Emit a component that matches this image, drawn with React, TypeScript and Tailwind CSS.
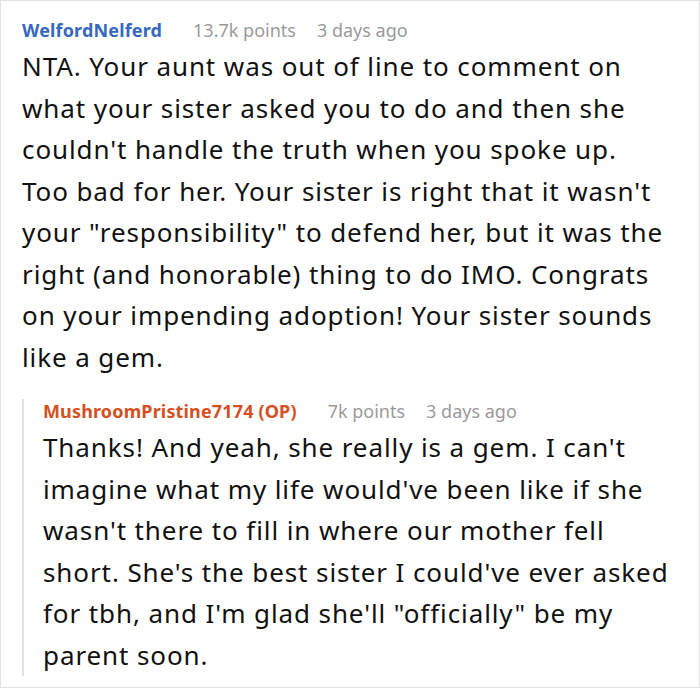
const parentLines = [
  'NTA. Your aunt was out of line to comment on',
  'what your sister asked you to do and then she',
  "couldn't handle the truth when you spoke up.",
  "Too bad for her. Your sister is right that it wasn't",
  'your "responsibility" to defend her, but it was the',
  'right (and honorable) thing to do IMO. Congrats',
  'on your impending adoption! Your sister sounds',
  'like a gem.',
];

const replyLines = [
  "Thanks! And yeah, she really is a gem. I can't",
  "imagine what my life would've been like if she",
  "wasn't there to fill in where our mother fell",
  "short. She's the best sister I could've ever asked",
  'for tbh, and I\'m glad she\'ll "officially" be my',
  'parent soon.',
];

const Meta = ({ name, nameClass, points }: { name: string; nameClass: string; points: string }) => (
  <div className="flex items-baseline text-[18px] leading-[24px]">
    <span className={`font-bold tracking-[0.15px] ${nameClass}`}>{name}</span>
    <span className="ml-[31px] text-[#9a9a9a]">{points}</span>
    <span className="ml-[21px] text-[#9a9a9a]">3 days ago</span>
  </div>
);

const Body = ({ lines }: { lines: string[] }) => (
  <div className="mt-[4px] text-[26px] leading-[41.5px] tracking-[0.9px] text-[#111111]">
    {lines.map((line) => (
      <div key={line} className="whitespace-nowrap">
        {line}
      </div>
    ))}
  </div>
);

const App = () => {
  return (
    <div
      className="w-[700px] h-[688px] bg-white border border-[#e2e2e2] pl-[21px] pt-[17px] overflow-hidden"
      style={{ fontFamily: '"Noto Sans", "Open Sans", sans-serif' }}
    >
      <Meta name="WelfordNelferd" nameClass="text-[#3569c0]" points="13.7k points" />
      <Body lines={parentLines} />

      {/* reply thread */}
      <div className="mt-[32px] border-l-2 border-[#e2e2e2] pl-[19px]">
        <div className="-mt-[11px]">
          <Meta
            name="MushroomPristine7174 (OP)"
            nameClass="text-[#d5501f]"
            points="7k points"
          />
        </div>
        <Body lines={replyLines} />
      </div>
    </div>
  );
};

export default App;
